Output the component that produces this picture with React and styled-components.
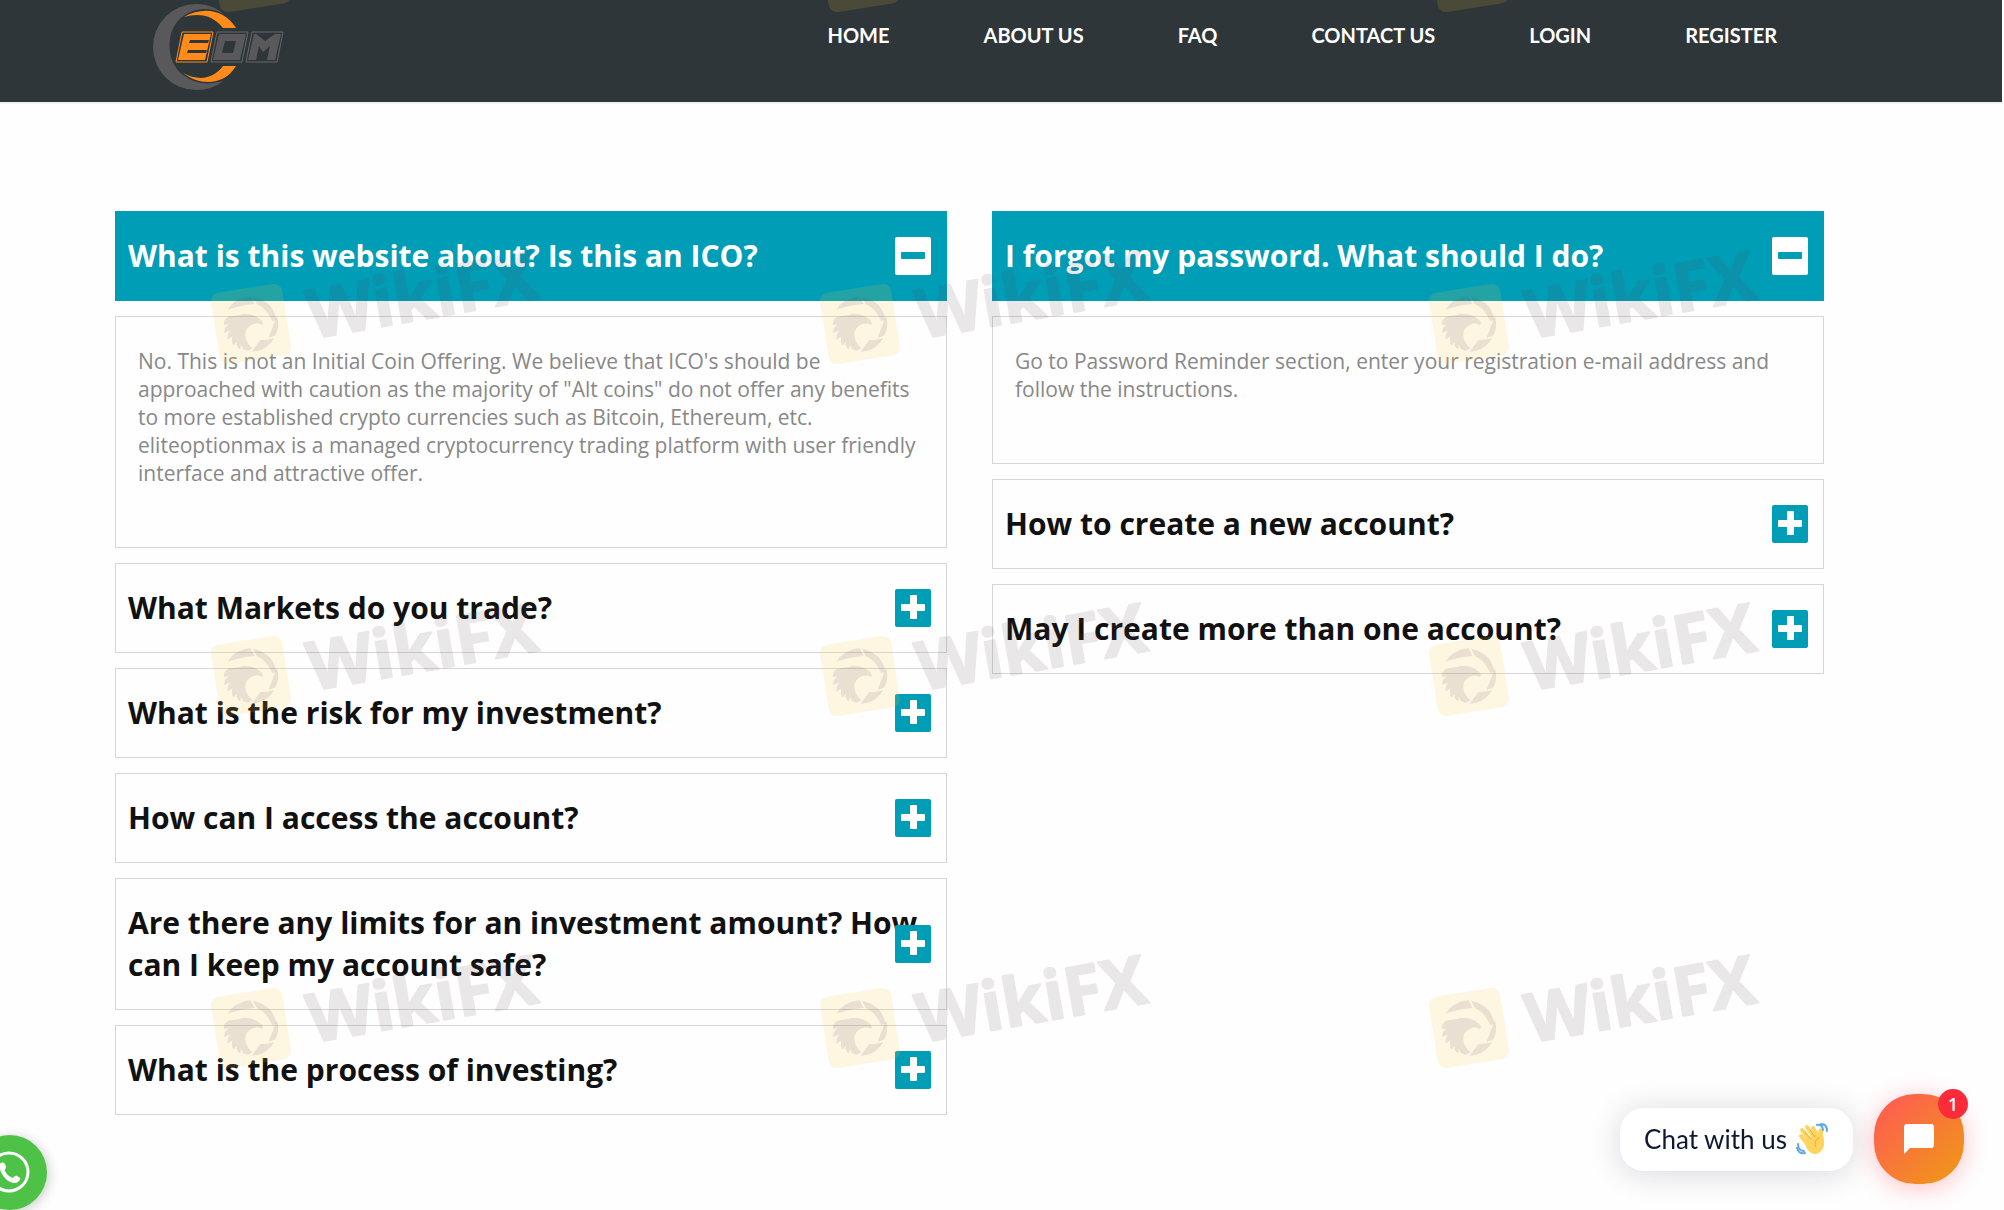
import { useState } from "react";
import styled, { createGlobalStyle } from "styled-components";

const GlobalStyle = createGlobalStyle`
  :root {
    --teal: #009db7;
    --dark: #2f3639;
    --heading-font: "Open Sans", sans-serif;
    --nav-font: Lato, sans-serif;
  }

  * {
    box-sizing: border-box;
  }

  body {
    margin: 0;
    background: #fefefe;
    font-family: var(--heading-font);
    overflow-x: hidden;
  }
`;

const Page = styled.div`
  position: relative;
  min-height: 100vh;
  overflow: hidden;
`;

const Header = styled.header`
  background: var(--dark);
  border-bottom: 2px solid #f0f1f2;
  display: flex;
  justify-content: space-between;
  align-items: flex-start;
  height: 104px;
  margin-right: 2px;
  padding: 0 225px 0 150px;

  .logo {
    display: block;
    padding-top: 2px;
  }

  .logo svg {
    display: block;
  }
`;

const Nav = styled.nav`
  display: flex;
  gap: 94px;
  padding-top: 23px;

  a {
    color: #fff;
    font-family: var(--nav-font);
    font-size: 20px;
    font-weight: 700;
    line-height: 24px;
    text-decoration: none;
    white-space: nowrap;
  }
`;

const Main = styled.main`
  display: grid;
  grid-template-columns: 1fr 1fr;
  align-items: start;
  gap: 45px;
  padding: 107px 180px 90px 115px;
`;

const Column = styled.div`
  display: flex;
  flex-direction: column;
  gap: 15px;
`;

const Question = styled.button`
  position: relative;
  display: block;
  width: 100%;
  margin: 0;
  padding: 23px 12px;
  border: 1px solid ${({ $open }) => ($open ? "var(--teal)" : "#d5d6d8")};
  background: ${({ $open }) => ($open ? "var(--teal)" : "#fefefe")};
  color: ${({ $open }) => ($open ? "#fff" : "#111")};
  font-family: var(--heading-font);
  font-size: 30px;
  font-weight: 700;
  line-height: 42px;
  text-align: left;
  cursor: pointer;
`;

const Toggle = styled.span`
  position: absolute;
  top: 50%;
  right: 15px;
  width: 36px;
  height: 38px;
  margin-top: -19px;
  border-radius: 2px;
  background: ${({ $open }) => ($open ? "#fff" : "var(--teal)")};
  color: ${({ $open }) => ($open ? "var(--teal)" : "#fff")};

  svg {
    display: block;
  }
`;

const Answer = styled.div`
  border: 1px solid #d5d6d8;
  padding: 30px 22px 60px;
  color: #888;
  font-size: 21px;
  line-height: 28px;

  p {
    margin: 0;
  }
`;

const WatermarkLayer = styled.svg`
  position: absolute;
  inset: 0;
  width: 100%;
  height: 100%;
  pointer-events: none;
`;

const WhatsAppButton = styled.a`
  position: fixed;
  left: -28px;
  bottom: 0;
  width: 75px;
  height: 75px;
  border-radius: 50%;
  background: #4dc247;
  box-shadow: 2px 2px 12px rgba(0, 0, 0, 0.2);
`;

const ChatWidget = styled.div`
  position: fixed;
  right: 40px;
  bottom: 26px;
  display: flex;
  align-items: center;
  gap: 21px;
`;

const ChatLabel = styled.button`
  display: flex;
  align-items: center;
  gap: 9px;
  height: 63px;
  padding: 0 25px 0 24px;
  border: 0;
  border-radius: 24px;
  background: #fff;
  box-shadow: 0 3px 32px rgba(0, 18, 46, 0.16);
  color: #0f1833;
  font-family: var(--nav-font);
  font-size: 26px;
  line-height: 32px;
  cursor: pointer;
`;

const ChatButton = styled.button`
  position: relative;
  width: 90px;
  height: 90px;
  padding: 0;
  border: 0;
  border-radius: 41px;
  background: linear-gradient(135deg, #ff5b54 5%, #f0941a 90%);
  box-shadow: 0 4px 24px rgba(255, 50, 70, 0.3);
  cursor: pointer;

  svg {
    display: block;
    margin: 0 auto;
  }
`;

const Badge = styled.span`
  position: absolute;
  top: -5px;
  right: -4px;
  width: 30px;
  height: 30px;
  border-radius: 50%;
  background: #fb2b3a;
  color: #fff;
  font-family: var(--heading-font);
  font-size: 18px;
  font-weight: 600;
  line-height: 30px;
  text-align: center;
`;

const links = ["HOME", "ABOUT US", "FAQ", "CONTACT US", "LOGIN", "REGISTER"];

const columns = [
  [
    {
      q: "What is this website about? Is this an ICO?",
      a: "No. This is not an Initial Coin Offering. We believe that ICO's should be approached with caution as the majority of \"Alt coins\" do not offer any benefits to more established crypto currencies such as Bitcoin, Ethereum, etc. eliteoptionmax is a managed cryptocurrency trading platform with user friendly interface and attractive offer.",
    },
    { q: "What Markets do you trade?" },
    { q: "What is the risk for my investment?" },
    { q: "How can I access the account?" },
    {
      q: "Are there any limits for an investment amount? How can I keep my account safe?",
    },
    { q: "What is the process of investing?" },
  ],
  [
    {
      q: "I forgot my password. What should I do?",
      a: "Go to Password Reminder section, enter your registration e-mail address and follow the instructions.",
    },
    { q: "How to create a new account?" },
    { q: "May I create more than one account?" },
  ],
];

const Logo = () => (
  <svg width="136" height="90" viewBox="0 0 136 90" role="img" aria-label="EOM">
    <path
      d="M74 12 C64 4 54 2 46 2 A43 43 0 0 0 46 88 C56 88 66 85 73 79 Q50 86 33 73 C15 60 15 27 33 14 Q52 1 74 12Z"
      fill="#59595b"
    />
    <path
      d="M34 15 C54 3 76 9 86 26 L73 26 C64 14 50 10 34 15Z M33 71 C50 84 74 84 86 64 L73 64 C64 76 50 80 33 71Z"
      fill="#ff8c1a"
    />
    <path d="M32 30 H63 L57 60 H26Z" fill="#2f3639" stroke="#ff8c1a" strokeWidth="1" />
    <path d="M34 32 H61 L55 58 H28Z" fill="#ff8c1a" />
    <path
      d="M67 30 H98 L92 60 H61Z M102 30 H133 L127 60 H96Z"
      fill="#2f3639"
      stroke="#64686a"
      strokeWidth="1"
    />
    <path d="M69 32 H96 L90 58 H63Z M104 32 H131 L125 58 H98Z" fill="#59595b" />
    <path
      d="M40 38 H59 L58 41 H39Z M38 48 H57 L56 51 H37Z M75 39 H86 L83 51 H72Z M106 32 L115 39 L125 32Z M106 58 L109 44 L113 50 L120 44 L117 58Z"
      fill="#2f3639"
    />
  </svg>
);

const ToggleIcon = ({ open }) => (
  <svg width="36" height="38" viewBox="0 0 36 38" fill="currentColor" aria-hidden="true">
    <rect x="6" y="15" width="24" height="7" rx="1" />
    {!open && <rect x="15" y="6" width="7" height="24" rx="1" />}
  </svg>
);

const FaqItem = ({ q, a }) => {
  const [open, setOpen] = useState(Boolean(a));

  return (
    <>
      <Question $open={open} aria-expanded={open} onClick={() => setOpen(!open)}>
        {q}
        <Toggle $open={open}>
          <ToggleIcon open={open} />
        </Toggle>
      </Question>
      {open && a && (
        <Answer>
          <p>{a}</p>
        </Answer>
      )}
    </>
  );
};

const Watermark = () => (
  <WatermarkLayer aria-hidden="true">
    <defs>
      <pattern
        id="mark"
        x="200"
        y="-112"
        width="609"
        height="352"
        patternUnits="userSpaceOnUse"
      >
        <rect
          x="15"
          y="48"
          width="72"
          height="72"
          rx="8"
          transform="rotate(-9 51 84)"
          fill="#f8c832"
          fillOpacity="0.14"
        />
        {/* eagle head inside a shutter ring */}
        <g transform="translate(7 1) scale(0.3333)" fill="#5a4664" fillOpacity="0.12">
          <path d="M62 206 C76 182 102 168 130 166 L143 190 C112 190 90 198 62 206Z" />
          <path d="M138 167 C176 174 204 200 208 236 L196 240 C184 214 166 196 150 190Z" />
          <path d="M210 226 C217 250 213 272 204 284 L184 291 C196 268 200 244 210 226Z" />
          <path d="M202 290 C188 316 162 332 134 332 L160 297 C174 298 188 295 202 290Z" />
          <path d="M54 236 C70 218 88 228 104 220 C124 217 146 222 158 234 C166 238 170 246 165 252 C158 246 146 246 138 250 C120 258 112 272 116 288 C118 304 128 314 136 322 C128 330 116 330 108 324 L102 312 L100 324 C92 322 88 314 88 302 L80 314 C74 308 74 296 76 286 L62 296 C60 284 64 276 70 268 L52 276 C50 264 58 256 66 250 L51 252 C50 246 50 242 54 236Z" />
        </g>
        <text
          transform="translate(112 99) rotate(-10)"
          fontFamily="Open Sans, sans-serif"
          fontSize="68"
          fontWeight="700"
          fill="#5a3c46"
          stroke="#5a3c46"
          strokeWidth="2"
          strokeLinejoin="round"
          opacity="0.12"
        >
          WikiFX
        </text>
      </pattern>
    </defs>
    <rect width="100%" height="100%" fill="url(#mark)" />
  </WatermarkLayer>
);

const WaveIcon = () => (
  <svg width="32" height="32" viewBox="0 0 32 32" aria-hidden="true">
    <g stroke="#ffd45e" strokeLinecap="round" fill="none">
      <path d="M5 13 L13 23 M6 7 L16 20 M11 4 L20 18 M17 5 L23 17" strokeWidth="4" />
      <path d="M25 8 C23 11 26 14 25 19" strokeWidth="5" />
    </g>
    <path d="M8 17 L21 12 L27 14 C30 22 27 29 20 31 C14 32 10 26 8 17Z" fill="#ffd45e" />
    <path
      d="M9 9 L15 16 M14 7 L19 14 M23 15 C19 17 18 21 20 24"
      stroke="#e8a93a"
      fill="none"
      strokeLinecap="round"
    />
    <path
      d="M21 2 C25 1 27 4 27 7 M25 1 C29 1 31 4 31 8 M2 21 C2 26 5 28 8 28 M1 25 C2 29 5 31 9 30"
      stroke="#5da7e8"
      strokeWidth="2"
      fill="none"
      strokeLinecap="round"
    />
  </svg>
);

const App = () => {
  return (
    <Page>
      <GlobalStyle />
      <Header>
        <a className="logo" href="#home">
          <Logo />
        </a>
        <Nav>
          {links.map((link) => (
            <a key={link} href="#faq">
              {link}
            </a>
          ))}
        </Nav>
      </Header>

      <Main>
        {columns.map((items, i) => (
          <Column key={i}>
            {items.map((item) => (
              <FaqItem key={item.q} {...item} />
            ))}
          </Column>
        ))}
      </Main>

      <Watermark />

      <WhatsAppButton href="#whatsapp" aria-label="WhatsApp">
        <svg width="75" height="75" viewBox="0 0 75 75" aria-hidden="true">
          <circle cx="37" cy="37" r="19" fill="none" stroke="#fff" strokeWidth="3" />
          <path
            d="M28 29 C29 27 32 27 33 29 L34 32 C34 34 32 35 33 36 C35 40 38 42 41 43 C42 42 43 40 45 41 L48 43 C49 44 47 47 44 48 C36 49 26 38 28 29Z"
            fill="#fff"
          />
        </svg>
      </WhatsAppButton>

      <ChatWidget>
        <ChatLabel>
          Chat with us
          <WaveIcon />
        </ChatLabel>
        <ChatButton aria-label="Open chat">
          <svg width="30" height="30" viewBox="0 0 30 30" fill="#fff" aria-hidden="true">
            <path d="M3 0 H27 Q30 0 30 3 V21 Q30 24 27 24 H6 L0 30 V3 Q0 0 3 0Z" />
          </svg>
          <Badge>1</Badge>
        </ChatButton>
      </ChatWidget>
    </Page>
  );
};
export default App;
